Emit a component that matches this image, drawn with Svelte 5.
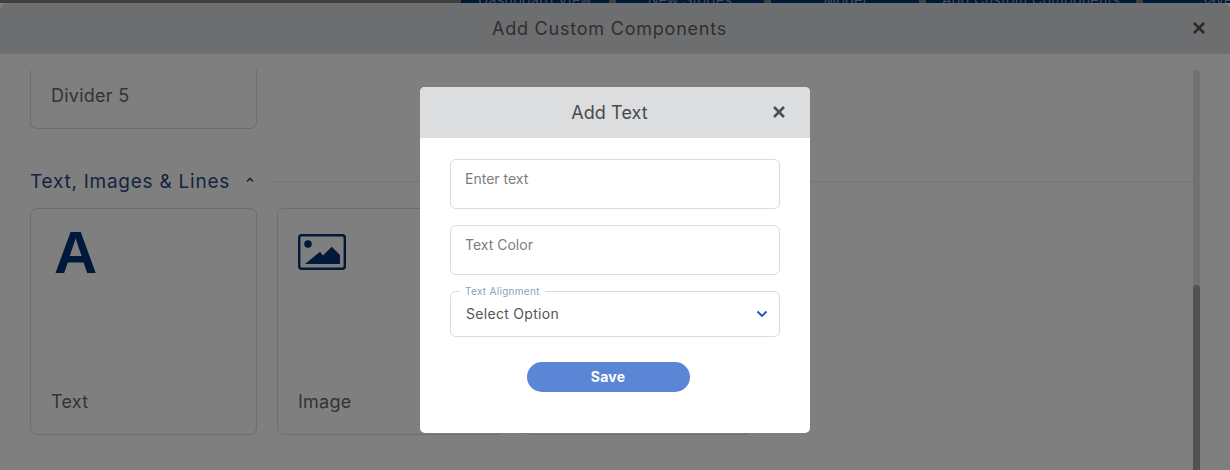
<script lang="ts">
	let enterText = $state('');
	let textColor = $state('');
	let alignment = $state('');
	const tabs = [
		{ label: 'Dashboard View', width: 148 },
		{ label: 'New Stories', width: 148 },
		{ label: 'Model', width: 148 },
		{ label: 'Add Custom Components', width: 210 },
		{ label: 'Save', width: 145 },
	];
</script>

<div class="page">
	<div class="top-tabs">
		{#each tabs as t}
			<span class="tab" style="width: {t.width}px">{t.label}</span>
		{/each}
	</div>

	<div class="outer-modal">
		<div class="outer-header">
			<h2 class="outer-title">Add Custom Components</h2>
			<button class="close-btn outer-close" aria-label="Close">
				<svg viewBox="0 0 14 14" width="14" height="14"><path d="M2 2 12 12M12 2 2 12" /></svg>
			</button>
		</div>

		<div class="outer-body">
			<div class="scroll-content">
				<div class="card-row first-row">
					<div class="card short-card"><span class="card-label">Divider 5</span></div>
				</div>

				<div class="section-head">
					<span class="section-title">Text, Images &amp; Lines</span>
					<svg class="caret" viewBox="0 0 8 6" width="8" height="6"><path d="M1 4.5 4 1.5 7 4.5" /></svg>
					<span class="section-line"></span>
				</div>

				<div class="card-row">
					<div class="card">
						<span class="letter-icon">A</span>
						<span class="card-label">Text</span>
					</div>
					<div class="card">
						<svg class="image-icon" viewBox="0 0 48 36" width="48" height="36">
							<rect x="1.2" y="1.2" width="45.6" height="33.6" rx="2.5" class="image-frame" />
							<circle cx="10" cy="10" r="3.8" class="image-fill" />
							<path class="image-fill" d="M7 30 22 17.7l3 3.9 8.7-8.9L42 21v9z" />
						</svg>
						<span class="card-label">Image</span>
					</div>
					<div class="card"></div>
				</div>
			</div>
			<div class="scrollbar"><div class="scroll-thumb"></div></div>
		</div>
	</div>

	<div class="backdrop">
		<div class="modal">
			<div class="modal-header">
				<h3 class="modal-title">Add Text</h3>
				<button class="close-btn modal-close" aria-label="Close">
					<svg viewBox="0 0 14 14" width="14" height="14"><path d="M2 2 12 12M12 2 2 12" /></svg>
				</button>
			</div>
			<div class="modal-body">
				<input class="field" placeholder="Enter text" bind:value={enterText} />
				<input class="field" placeholder="Text Color" bind:value={textColor} />
				<div class="select-field">
					<span class="select-label">Text Alignment</span>
					<select bind:value={alignment}>
						<option value="">Select Option</option>
						<option value="left">Left</option>
						<option value="center">Center</option>
						<option value="right">Right</option>
					</select>
					<svg class="chevron" viewBox="0 0 12 8" width="12" height="8"><path d="M1.5 1.5 6 6l4.5-4.5" /></svg>
				</div>
				<button class="save-btn">Save</button>
			</div>
		</div>
	</div>
</div>

<style>
	:global(body) {
		margin: 0;
		font-family: Inter, "Open Sans", sans-serif;
		background: #7f7f7f;
	}
	.page {
		position: relative;
		width: 1230px;
		height: 470px;
		overflow: hidden;
		background: #7f7f7f;
		display: flex;
		flex-direction: column;
	}
	.top-tabs {
		height: 3px;
		flex-shrink: 0;
		background: #3f3f3f;
		display: flex;
		gap: 7px;
		padding-left: 461px;
		overflow: hidden;
	}
	.tab {
		height: 3px;
		flex-shrink: 0;
		background: #00183a;
		color: #46505e;
		font-size: 14px;
		letter-spacing: 0.4px;
		line-height: 0;
		text-align: center;
		overflow: hidden;
	}

	.outer-modal {
		flex: 1;
		min-height: 0;
		display: flex;
		flex-direction: column;
		border-radius: 8px 8px 0 0;
		overflow: hidden;
		background: #7f7f7f;
	}
	.outer-header {
		height: 51px;
		flex-shrink: 0;
		box-sizing: border-box;
		padding-right: 11px;
		display: flex;
		align-items: center;
		justify-content: center;
		background: #6d6e70;
		position: relative;
	}
	.outer-title {
		margin: 0;
		font-size: 18px;
		font-weight: 400;
		letter-spacing: 0.78px;
		color: #2f2f2f;
	}
	.close-btn {
		position: absolute;
		background: none;
		border: none;
		padding: 0;
		display: flex;
		cursor: pointer;
	}
	.close-btn path {
		fill: none;
		stroke-width: 2.5;
	}
	.outer-close {
		right: 24px;
		top: 18px;
	}
	.outer-close path { stroke: #2a2a2a; }

	.outer-body {
		flex: 1;
		min-height: 0;
		display: flex;
		padding: 16px 30px 0 30px;
		position: relative;
	}
	.scroll-content {
		flex: 1;
		min-width: 0;
		overflow: hidden;
		display: flex;
		flex-direction: column;
	}
	.card-row {
		display: flex;
		gap: 20px;
	}
	.card {
		width: 227px;
		height: 227px;
		box-sizing: border-box;
		border: 1px solid #6e6e6e;
		border-radius: 7px;
		padding: 0 20px 21px;
		display: flex;
		flex-direction: column;
		position: relative;
		flex-shrink: 0;
	}
	.short-card {
		height: 59px;
		border-top: none;
		border-radius: 0 0 7px 7px;
	}
	.card-label {
		margin-top: auto;
		font-size: 18px;
		letter-spacing: 0.25px;
		line-height: 22px;
		color: #333;
	}
	.short-card .card-label {
		margin-top: 15px;
	}
	.section-head {
		display: flex;
		align-items: center;
		height: 24px;
		margin: 40px 0 15px;
	}
	.section-title {
		font-size: 19px;
		letter-spacing: 0.75px;
		color: #14243f;
	}
	.caret {
		margin-left: 16px;
		fill: none;
		stroke: #14243f;
		stroke-width: 1.6;
		position: relative;
		top: -1px;
	}
	.section-line {
		flex: 1;
		height: 1px;
		background: #747474;
		margin-left: 16px;
	}
	.letter-icon {
		font-family: "Liberation Sans", Arial, sans-serif;
		font-weight: 700;
		font-size: 60px;
		line-height: 61px;
		color: #00183a;
		margin: 13px 0 0 3px;
	}
	.image-icon {
		margin-top: 25px;
	}
	.image-frame {
		fill: none;
		stroke: #00183a;
		stroke-width: 2.4;
	}
	.image-fill {
		fill: #00183a;
	}

	.scrollbar {
		width: 7px;
		flex-shrink: 0;
		background: #727272;
		border-radius: 4px 4px 0 0;
		display: flex;
		flex-direction: column;
		justify-content: flex-end;
	}
	.scroll-thumb {
		height: 185px;
		background: #525252;
		border-radius: 4px 4px 0 0;
	}

	.backdrop {
		position: absolute;
		inset: 0;
		display: flex;
		justify-content: center;
		align-items: flex-start;
		padding-top: 87px;
	}
	.modal {
		width: 390px;
		height: 346px;
		border-radius: 5px;
		overflow: hidden;
		background: #fff;
		position: relative;
	}
	.modal-header {
		height: 51px;
		box-sizing: border-box;
		padding-right: 11px;
		display: flex;
		align-items: center;
		justify-content: center;
		background: #dcdddf;
		position: relative;
	}
	.modal-title {
		margin: 0;
		font-size: 18px;
		font-weight: 400;
		letter-spacing: 0.1px;
		color: #4a4a4a;
	}
	.modal-close {
		right: 24px;
		top: 18px;
	}
	.modal-close path { stroke: #4a4d52; }
	.modal-body {
		padding: 21px 30px 0;
		display: flex;
		flex-direction: column;
		gap: 16px;
	}
	.field {
		box-sizing: border-box;
		width: 100%;
		height: 50px;
		padding: 0 14px 12px;
		border: 1px solid #dcdcdc;
		border-radius: 6px;
		font: inherit;
		font-size: 14px;
		color: #333;
		outline: none;
	}
	.field::placeholder {
		color: #7d7d7d;
		opacity: 1;
	}
	.select-field {
		position: relative;
		box-sizing: border-box;
		height: 46px;
		border: 1px solid #dcdcdc;
		border-radius: 6px;
	}
	.select-label {
		position: absolute;
		left: 9px;
		top: -7px;
		padding: 0 5px;
		background: #fff;
		font-size: 10px;
		letter-spacing: 0.3px;
		line-height: 12px;
		color: #8a9fc0;
	}
	select {
		appearance: none;
		width: 100%;
		height: 100%;
		padding: 0 15px 2px;
		border: none;
		background: none;
		font: inherit;
		font-size: 14px;
		letter-spacing: 0.3px;
		color: #555;
		outline: none;
	}
	.chevron {
		position: absolute;
		right: 11px;
		top: 18px;
		fill: none;
		stroke: #1f4fbf;
		stroke-width: 1.8;
		pointer-events: none;
	}
	.save-btn {
		align-self: center;
		width: 163px;
		height: 30px;
		margin: 9px 0 0 -14px;
		padding: 0 0 2px;
		border: none;
		border-radius: 15px;
		background: #5b86d6;
		color: #fff;
		font: inherit;
		font-size: 14px;
		font-weight: 700;
		letter-spacing: 0.2px;
		cursor: pointer;
	}
</style>
